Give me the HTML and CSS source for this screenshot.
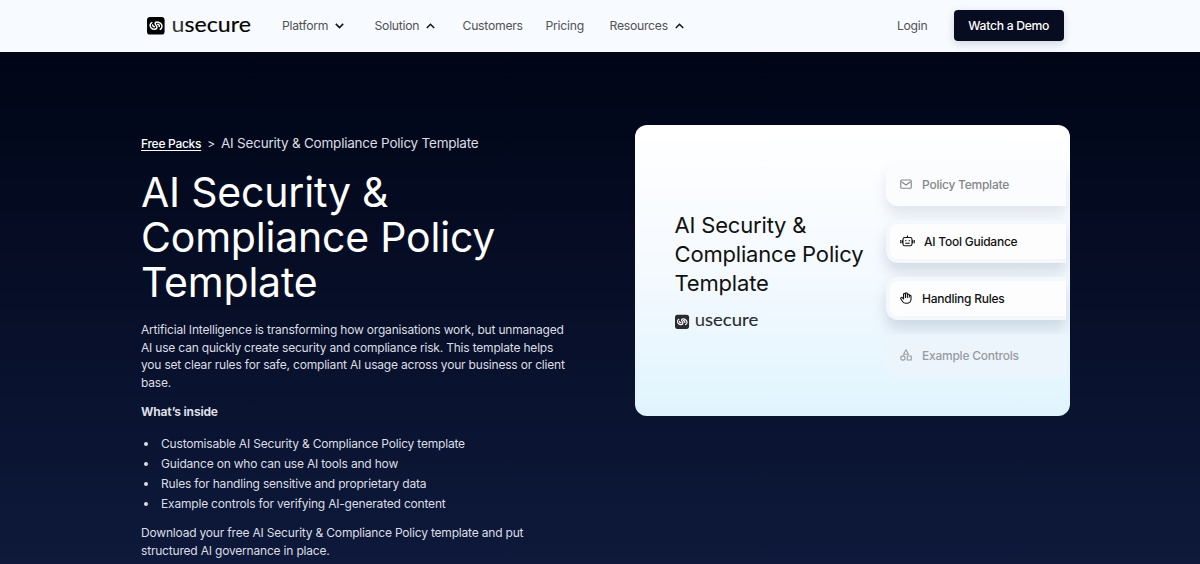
FILE: index.html
```html
<!DOCTYPE html>
<html lang="en">
<head>
<meta charset="utf-8">
<title>AI Security &amp; Compliance Policy Template</title>
<link rel="stylesheet" href="styles.css">
</head>
<body>
<header class="bar">
  <svg class="brand" viewBox="0 0 105 20">
    <rect x="0" y="1" width="17.600" height="17.600" rx="3.2" fill="currentColor"/>
    <path class="logo-mark" d="M13.200 13.200C15.400 12.200 15.600 9 13.600 7.400C11.600 5.600 8.200 5.600 8.200 7.600C8.200 9.200 10 9.600 9.900 11.400C9.800 13.800 6 13.800 4.200 11.900C2.600 10 2.800 7.600 4.800 6.600M5.600 9.100C5.800 10.200 6.600 10.800 7.400 10.800M10.700 8.300C11.800 8.300 12.300 9.500 12.300 10.600"/>
    <text x="24.600" y="15.500" class="logo-text" textLength="79.400" lengthAdjust="spacingAndGlyphs"><tspan class="logo-light">u</tspan>secure</text>
  </svg>
  <nav class="nav">
    <a class="item platform">Platform<svg class="chev" viewBox="0 0 9 6"><path d="M.8 .9L4.5 4.6L8.2 .9"/></svg></a>
    <a class="item solution">Solution<svg class="chev" viewBox="0 0 9 6"><path d="M.8 5L4.5 1.3L8.2 5"/></svg></a>
    <a class="item customers">Customers</a>
    <a class="item pricing">Pricing</a>
    <a class="item">Resources<svg class="chev" viewBox="0 0 9 6"><path d="M.8 5L4.5 1.3L8.2 5"/></svg></a>
  </nav>
  <a class="item login">Login</a>
  <a class="demo">Watch a Demo</a>
</header>
<main class="hero">
  <section class="copy">
    <div class="crumbs"><a class="packs">Free Packs</a><span class="sep">&gt;</span><span>AI Security &amp; Compliance Policy Template</span></div>
    <h1 class="title">AI Security &amp;<br>Compliance Policy<br>Template</h1>
    <p class="para">Artificial Intelligence is transforming how organisations work, but unmanaged<br>AI use can quickly create security and compliance risk. This template helps<br>you set clear rules for safe, compliant AI usage across your business or client<br>base.</p>
    <p class="para"><strong>What’s inside</strong></p>
    <ul class="list">
      <li>Customisable AI Security &amp; Compliance Policy template</li>
      <li>Guidance on who can use AI tools and how</li>
      <li>Rules for handling sensitive and proprietary data</li>
      <li>Example controls for verifying AI-generated content</li>
    </ul>
    <p class="para">Download your free AI Security &amp; Compliance Policy template and put<br>structured AI governance in place.</p>
  </section>
  <section class="card">
    <div class="card-copy">
      <h2 class="card-title">AI Security &amp;<br>Compliance Policy<br>Template</h2>
      <svg class="card-brand" viewBox="0 0 105 20">
        <rect x="0" y="1" width="17.600" height="17.600" rx="3.2" fill="currentColor"/>
        <path class="logo-mark" d="M13.200 13.200C15.400 12.200 15.600 9 13.600 7.400C11.600 5.600 8.200 5.600 8.200 7.600C8.200 9.200 10 9.600 9.900 11.400C9.800 13.800 6 13.800 4.200 11.900C2.600 10 2.800 7.600 4.800 6.600M5.600 9.100C5.800 10.200 6.600 10.800 7.400 10.800M10.700 8.300C11.800 8.300 12.300 9.500 12.300 10.600"/>
        <text x="24.600" y="15.500" class="logo-text" textLength="79.400" lengthAdjust="spacingAndGlyphs"><tspan class="logo-light">u</tspan>secure</text>
      </svg>
    </div>
    <div class="tiles">
      <div class="tile faint"><svg class="icon" viewBox="0 0 24 24"><rect x="1.500" y="4" width="21" height="16.500" rx="2"/><path d="M3 7.500l9 6.500 9-6.500"/></svg>Policy Template</div>
      <div class="tile solid"><svg class="icon bot" viewBox="0 0 30 24"><rect x="6" y="5" width="18" height="16.500" rx="3.500"/><path d="M15 5V1M1.500 10v6.500M28.500 10v6.500M11.500 10v2.500M18.500 10v2.500M10.500 16.500h9M4.700 10.500v6M25.300 10.500v6"/></svg>AI Tool Guidance</div>
      <div class="tile solid"><svg class="icon" viewBox="0 0 24 24"><path d="M18.500 11V6a1.900 1.900 0 0 0-3.800 0v5V3.500a1.900 1.900 0 0 0-3.800 0V11V4.500a1.900 1.900 0 0 0-3.800 0V14l-2-2.400a2 2 0 0 0-3.200 2.400l3.600 5.500c1.500 2 3.500 3 6 3h2.500a8 8 0 0 0 8-8V8.500a1.900 1.900 0 0 0-3.500-1"/></svg>Handling Rules</div>
      <div class="tile ghost"><svg class="icon" viewBox="0 0 24 24"><path d="M12 1.500L7 10.500h10zM14.500 14h8v8h-8z"/><circle cx="5.800" cy="18" r="4.300"/></svg>Example Controls</div>
    </div>
  </section>
</main>
</body>
</html>
```
FILE: styles.css
```css
* { box-sizing: border-box; }
body { margin: 0; height: 564px; overflow: hidden; font-family: Inter, "Liberation Sans", sans-serif; background: #0d1638; }
.bar { height: 52px; padding: 0 136px 1px 147px; display: flex; align-items: center; background: #f7faff; }
.brand { width: 105px; height: 20px; color: #000; margin-right: 30px; flex: none; opacity: .99; overflow: visible; }
.logo-mark { fill: none; stroke: #fff; stroke-width: 1.5; stroke-linecap: round; stroke-linejoin: round; }
.logo-text { font-family: Lato, sans-serif; font-size: 22px; font-weight: 400; fill: currentColor; stroke: currentColor; stroke-width: .15; }
.logo-light { fill: #333; stroke: none; }
.nav { display: flex; }
.item { display: flex; align-items: center; font-size: 12.200px; letter-spacing: -.25px; line-height: 20px; color: #505256; }
.chev { width: 9px; height: 6px; margin-left: 7px; fill: none; stroke: #111; stroke-width: 1.5; }
.platform { width: 92.500px; }
.solution { width: 88px; }
.customers { width: 83px; }
.pricing { width: 64px; }
.login { margin-left: auto; margin-right: 26px; }
.demo { width: 110.500px; height: 31px; border-radius: 4px; background: #080c20; color: #fff; font-size: 12.200px; letter-spacing: -.3px; font-weight: 500; line-height: 31px; text-align: center; box-shadow: 0 3px 8px rgba(20, 30, 60, .16); }
.hero { height: 512px; padding: 73px 130px 0 141px; display: flex; justify-content: space-between; background: linear-gradient(#000516, #0e193b); color: #dcdee3; }
.copy { padding-top: 8px; white-space: nowrap; }
.crumbs { display: flex; align-items: center; height: 20px; font-size: 13.500px; letter-spacing: -.22px; }
.packs { font-size: 12px; letter-spacing: -.28px; font-weight: 500; color: #fff; text-decoration: underline; text-underline-offset: 1.500px; }
.sep { font-size: 12px; margin: 0 6px; }
.title { margin: 17px 0 16px; font-size: 41px; letter-spacing: -.2px; line-height: 45px; font-weight: 400; color: #fff; }
.para { margin: 0 0 11.500px; font-size: 12px; letter-spacing: -.19px; line-height: 17.500px; }
.list { margin: 13.500px 0 9.500px; padding-left: 17.500px; font-size: 12px; letter-spacing: -.19px; line-height: 20.250px; }
.list li { padding-left: 2.500px; }
.card { width: 435.500px; height: 291px; border-radius: 12px; display: flex; justify-content: space-between; overflow: hidden; padding-right: 4px; background: linear-gradient(#fff, #f5faff 48%, #e0f4fd); color: #111; }
.card-copy { padding: 86px 0 0 40px; white-space: nowrap; }
.card-title { margin: 0; font-size: 22px; letter-spacing: -.18px; line-height: 29px; font-weight: 400; }
.card-brand { display: block; width: 84px; height: 16px; margin-top: 16px; color: #28282e; opacity: .99; overflow: visible; }
.tiles { width: 180px; padding-top: 38px; display: flex; flex-direction: column; gap: 14px; }
.tile { height: 43px; padding: 0 0 1px 14px; display: flex; align-items: center; font-size: 12px; letter-spacing: -.24px; font-weight: 500; border-radius: 12px 0 0 12px; box-shadow: 0 9px 14px rgba(80, 95, 120, .2); white-space: nowrap; }
.icon { width: 12px; height: 12px; margin-right: 10px; fill: none; stroke: currentColor; stroke-width: 2.2; stroke-linejoin: round; }
.bot { width: 15px; margin-right: 9px; }
.faint { background: #fbfcfe; color: #858689; box-shadow: 0 9px 14px rgba(80, 95, 120, .14); }
.solid { background: #fdfdfd; border: 4px solid #f3f8fd; border-right: 0; padding-left: 10px; }
.ghost { background: #edf5fc; color: #969ca2; box-shadow: none; }
```
